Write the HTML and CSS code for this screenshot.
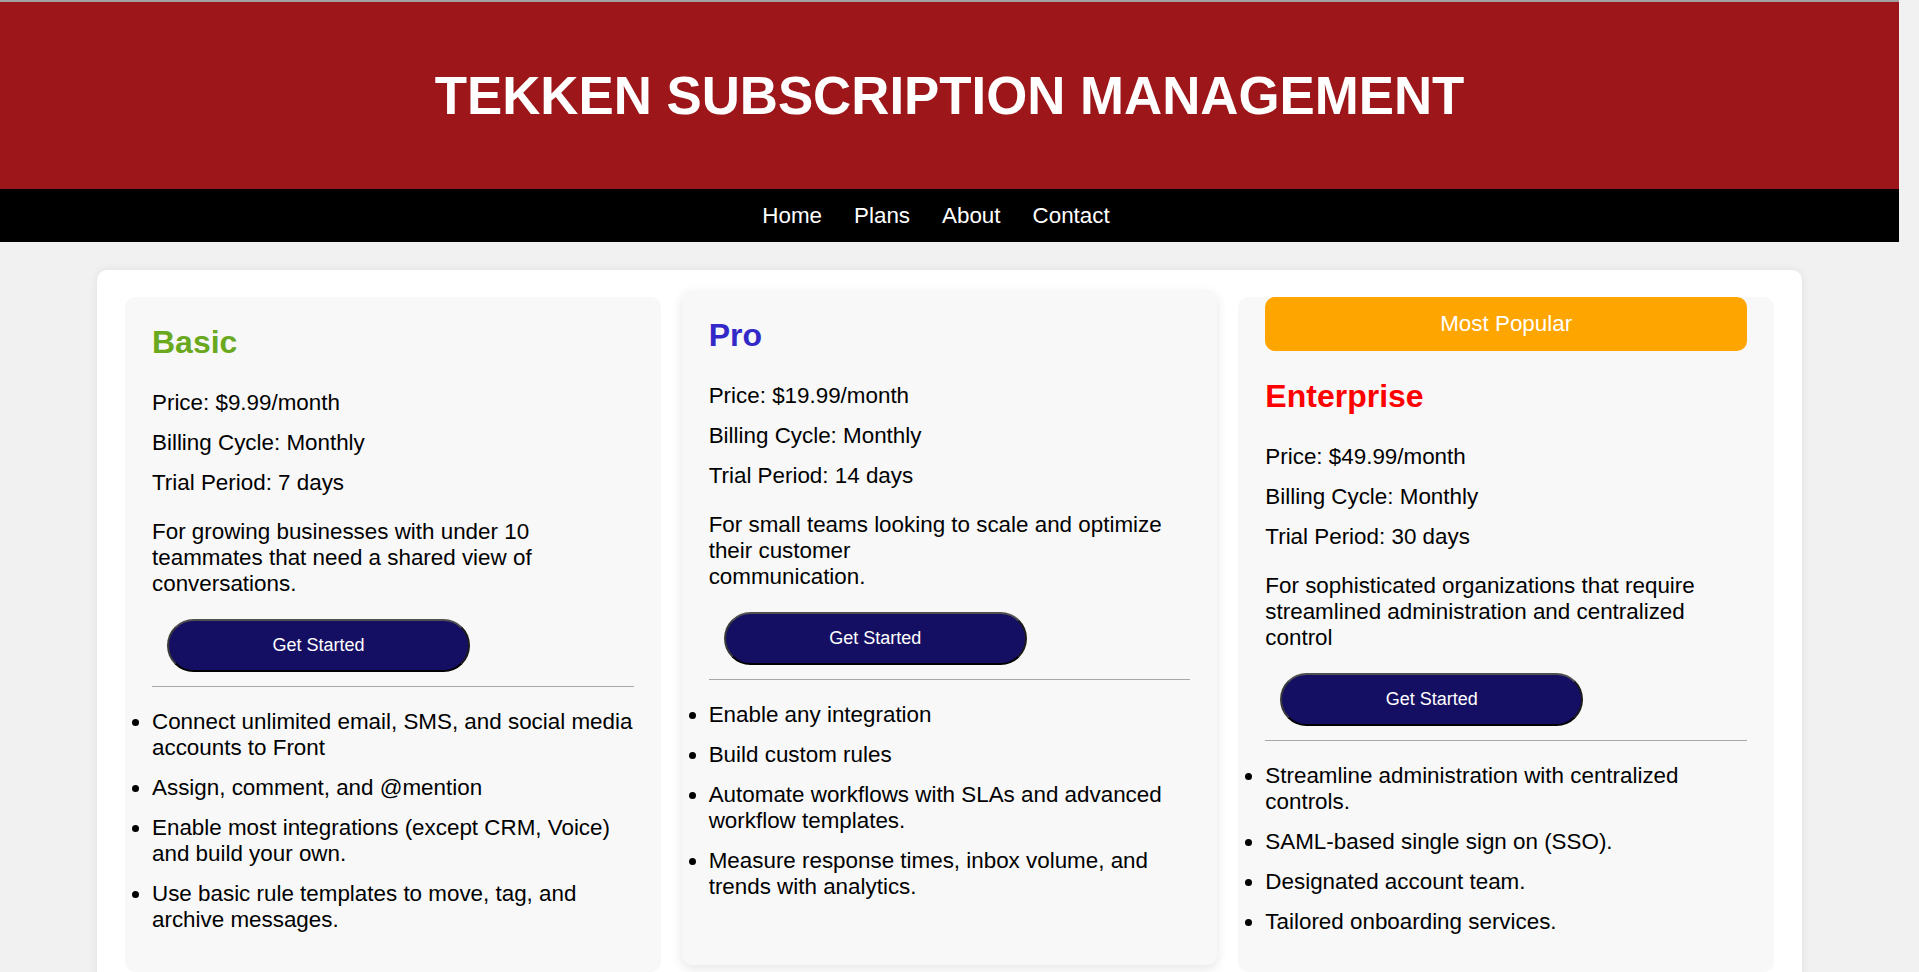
FILE: index.html
```html
<!DOCTYPE html>
<html lang="en">
<head>
<meta charset="utf-8">
<title>Tekken Subscription Management</title>
<link rel="stylesheet" href="styles.css">
</head>
<body>
<header class="site-header">
  <h1 class="site-title">TEKKEN SUBSCRIPTION MANAGEMENT</h1>
</header>
<nav class="site-nav">
  <a class="nav-link" href="#">Home</a>
  <a class="nav-link" href="#">Plans</a>
  <a class="nav-link" href="#">About</a>
  <a class="nav-link" href="#">Contact</a>
</nav>
<main class="plans">
  <div class="plan-grid">
    <section class="plan">
      <h2 class="plan-name plan-name-basic">Basic</h2>
      <p class="plan-detail">Price: $9.99/month</p>
      <p class="plan-detail">Billing Cycle: Monthly</p>
      <p class="plan-detail">Trial Period: 7 days</p>
      <p class="plan-desc">For growing businesses with under 10 teammates that need a shared view of conversations.</p>
      <button class="plan-btn" type="button">Get Started</button>
      <hr class="plan-rule">
      <ul class="plan-features">
        <li>Connect unlimited email, SMS, and social media accounts to Front</li>
        <li>Assign, comment, and @mention</li>
        <li>Enable most integrations (except CRM, Voice) and build your own.</li>
        <li>Use basic rule templates to move, tag, and archive messages.</li>
      </ul>
    </section>
    <section class="plan plan-featured">
      <h2 class="plan-name plan-name-pro">Pro</h2>
      <p class="plan-detail">Price: $19.99/month</p>
      <p class="plan-detail">Billing Cycle: Monthly</p>
      <p class="plan-detail">Trial Period: 14 days</p>
      <p class="plan-desc">For small teams looking to scale and optimize their customer<br>communication.</p>
      <button class="plan-btn" type="button">Get Started</button>
      <hr class="plan-rule">
      <ul class="plan-features">
        <li>Enable any integration</li>
        <li>Build custom rules</li>
        <li>Automate workflows with SLAs and advanced workflow templates.</li>
        <li>Measure response times, inbox volume, and trends with analytics.</li>
      </ul>
    </section>
    <section class="plan">
      <div class="plan-badge">Most Popular</div>
      <h2 class="plan-name plan-name-enterprise">Enterprise</h2>
      <p class="plan-detail">Price: $49.99/month</p>
      <p class="plan-detail">Billing Cycle: Monthly</p>
      <p class="plan-detail">Trial Period: 30 days</p>
      <p class="plan-desc">For sophisticated organizations that require streamlined administration and centralized control</p>
      <button class="plan-btn" type="button">Get Started</button>
      <hr class="plan-rule">
      <ul class="plan-features">
        <li>Streamline administration with centralized controls.</li>
        <li>SAML-based single sign on (SSO).</li>
        <li>Designated account team.</li>
        <li>Tailored onboarding services.</li>
      </ul>
    </section>
  </div>
</main>
</body>
</html>
```

FILE: styles.css
```css
html {
  background: #f1f1f1;
}

body {
  margin: 0 20px 0 0;
  min-height: 1315px;
  background: #f1f1f1;
  font-family: "Liberation Sans", Arial, sans-serif;
  color: #000;
}

.site-header {
  background: #9d1619;
  border-top: 2px solid #a2a2a2;
  padding: 63px 0;
  text-align: center;
}

.site-title {
  margin: 0;
  font-size: 52.8px;
  font-weight: bold;
  color: #fff;
  line-height: normal;
}

.site-nav {
  display: flex;
  justify-content: center;
  background: #000;
  padding: 13.6px 0 13.6px 5px;
  font-size: 22.4px;
  line-height: normal;
}

.nav-link {
  color: #fff;
  text-decoration: none;
  margin-right: 32px;
}

.plans {
  max-width: 1705px;
  margin: 28px auto;
  background: #fff;
  border-radius: 10px;
  padding: 27px 28px;
  box-sizing: border-box;
  box-shadow: 0 0 10px rgba(0, 0, 0, 0.07);
}

.plan-grid {
  display: flex;
  gap: 21px;
  align-items: stretch;
}

.plan {
  flex: 1 1 0;
  min-width: 0;
  background: #f8f8f8;
  border-radius: 10px;
  padding: 0 27px 15px;
  font-size: 22.4px;
  line-height: normal;
}

.plan-featured {
  transform: translateY(-7px);
  box-shadow: 0 4px 12px rgba(0, 0, 0, 0.1);
}

.plan-badge {
  background: #ffa500;
  color: #fff;
  text-align: center;
  padding: 14px 0;
  border-radius: 10px;
}

.plan-name {
  font-size: 32px;
  font-weight: bold;
  margin: 26.5px 0 29px;
}

.plan-name-basic {
  color: #6aa81e;
}

.plan-name-pro {
  color: #3328c8;
}

.plan-name-enterprise {
  color: #ff0000;
}

.plan-detail {
  margin: 14.3px 0;
}

.plan-desc {
  margin: 22.4px 0;
}

.plan-btn {
  display: block;
  box-sizing: border-box;
  width: 303px;
  margin: 15px 15px 14px;
  padding: 14px 0;
  font-family: "Liberation Sans", Arial, sans-serif;
  font-size: 18px;
  line-height: normal;
  color: #fff;
  background: #150f63;
  border: 2px solid;
  border-color: #505050 #1a1a1a #000 #3a3a3a;
  border-radius: 30px;
  cursor: pointer;
}

.plan-rule {
  border: none;
  border-top: 1px solid #a8a8a8;
  height: 0;
  margin: 13px 0 8px;
}

.plan-features {
  margin: 22px 0;
  padding: 0;
  list-style: disc outside;
}

.plan-features li {
  margin: 14px 0;
}
```
